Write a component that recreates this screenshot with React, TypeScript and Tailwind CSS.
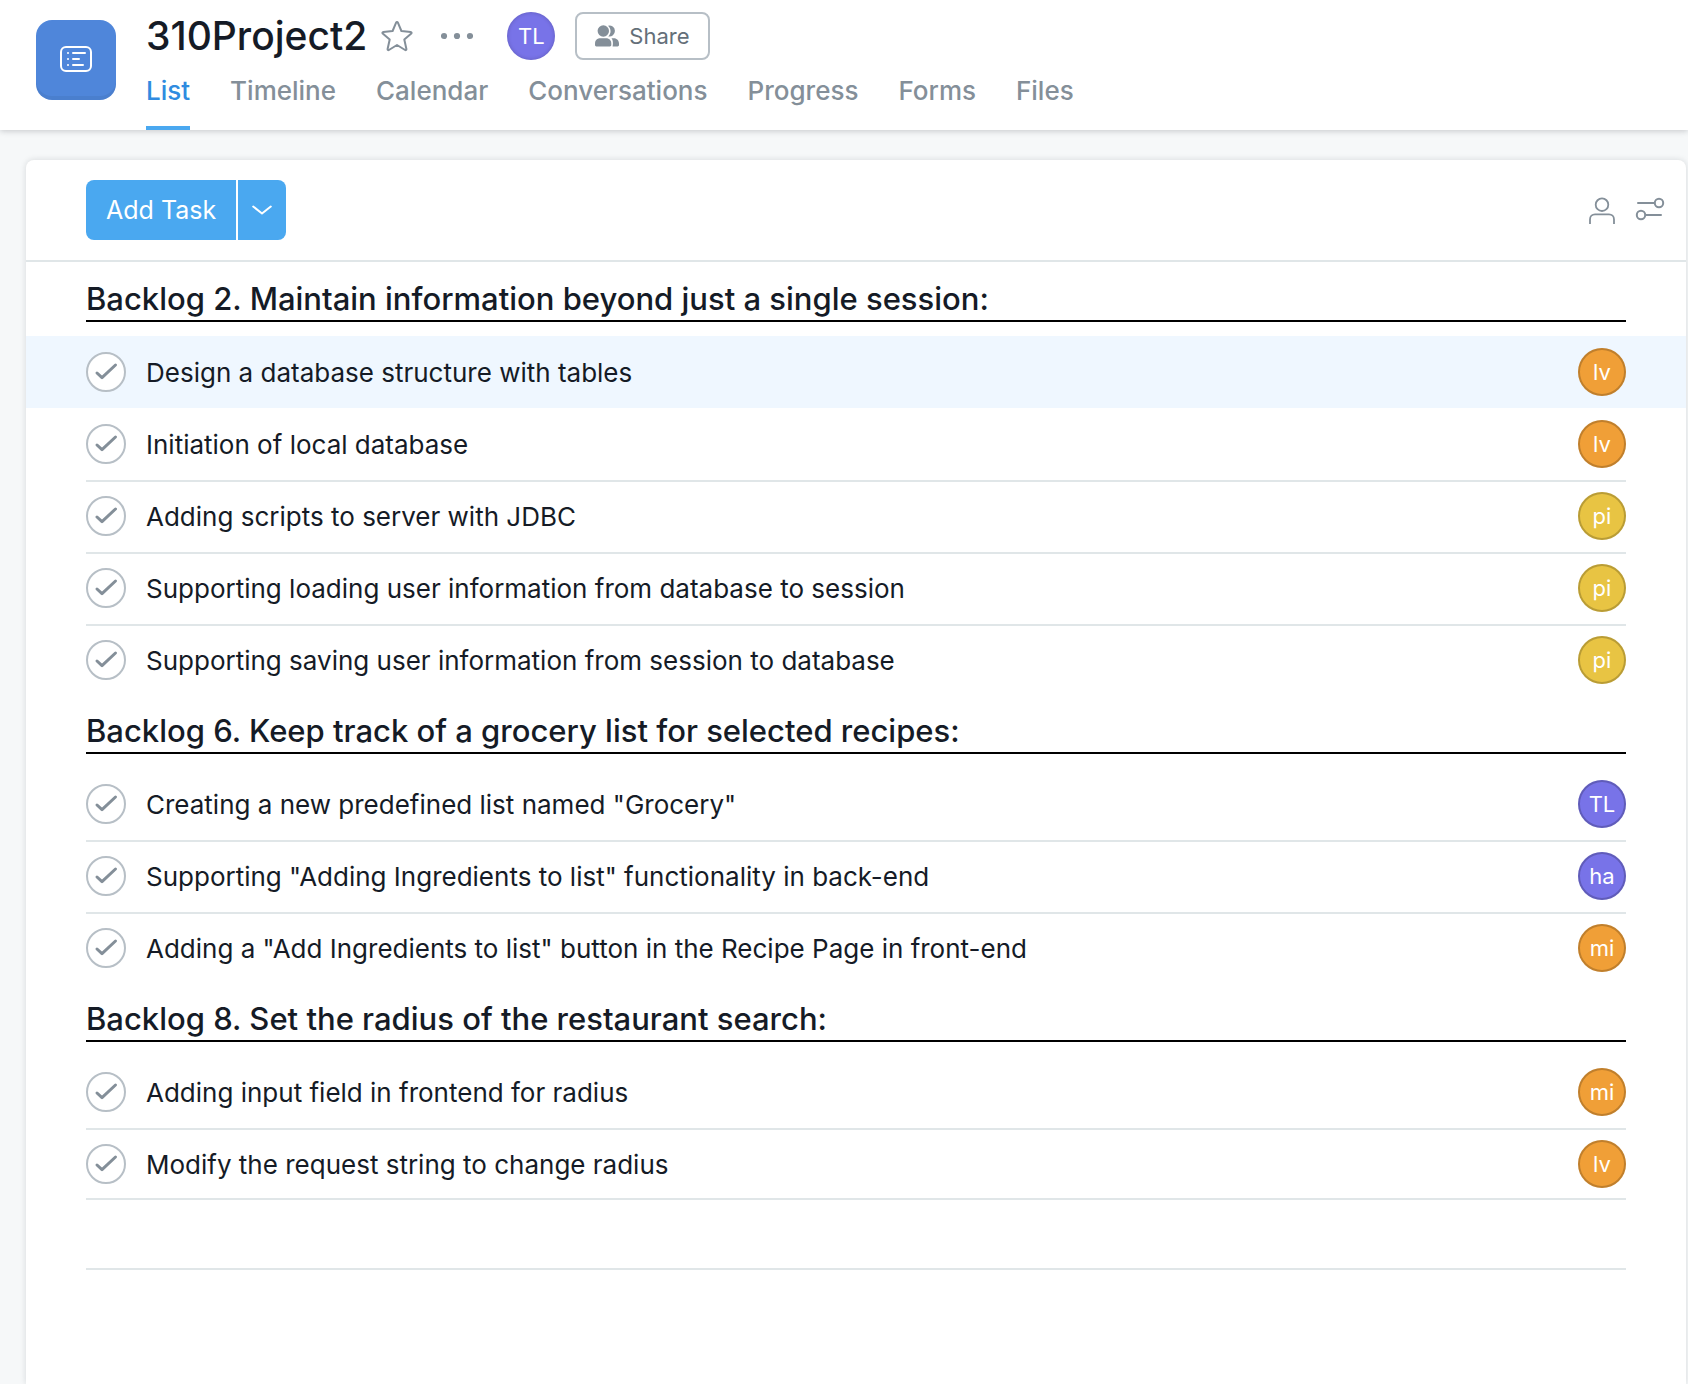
import React from "react";

type Tone = "orange" | "yellow" | "purple";
type Task = { title: string; who: string; tone: Tone; active?: boolean };
type Section = { title: string; tasks: Task[] };

const tabs = ["List", "Timeline", "Calendar", "Conversations", "Progress", "Forms", "Files"];

const sections: Section[] = [
  {
    title: "Backlog 2. Maintain information beyond just a single session:",
    tasks: [
      { title: "Design a database structure with tables", who: "lv", tone: "orange", active: true },
      { title: "Initiation of local database", who: "lv", tone: "orange" },
      { title: "Adding scripts to server with JDBC", who: "pi", tone: "yellow" },
      { title: "Supporting loading user information from database to session", who: "pi", tone: "yellow" },
      { title: "Supporting saving user information from session to database", who: "pi", tone: "yellow" },
    ],
  },
  {
    title: "Backlog 6. Keep track of a grocery list for selected recipes:",
    tasks: [
      { title: 'Creating a new predefined list named "Grocery"', who: "TL", tone: "purple" },
      { title: 'Supporting "Adding Ingredients to list" functionality in back-end', who: "ha", tone: "purple" },
      { title: 'Adding a "Add Ingredients to list" button in the Recipe Page in front-end', who: "mi", tone: "orange" },
    ],
  },
  {
    title: "Backlog 8. Set the radius of the restaurant search:",
    tasks: [
      { title: "Adding input field in frontend for radius", who: "mi", tone: "orange" },
      { title: "Modify the request string to change radius", who: "lv", tone: "orange" },
    ],
  },
];

const tones: Record<Tone, string> = {
  orange: "bg-[#f09f37] shadow-[inset_0_0_0_2px_rgba(0,0,0,0.2)]",
  yellow: "bg-[#e8c443] shadow-[inset_0_0_0_2px_rgba(0,0,0,0.2)]",
  purple: "bg-[#7873e8] shadow-[inset_0_0_0_2px_rgba(0,0,0,0.2)]",
};

function Header() {
  return (
    <header className="relative flex bg-white pl-9 shadow-[0_1px_6px_rgba(21,27,38,0.22)]">
      <div className="mt-5 flex size-20 shrink-0 items-center justify-center rounded-2xl bg-[#4f86da] shadow-[inset_0_-4px_0_rgba(0,0,0,0.05)]">
        <svg width="34" height="28" viewBox="0 0 34 28" fill="none" stroke="white" strokeWidth="2" strokeLinecap="round" className="mb-0.5">
          <rect x="2" y="2" width="30" height="24" rx="5" />
          <path d="M9 8h.01M9 14h.01M9 20h.01M14 8h12M14 14h6M14 20h10" />
        </svg>
      </div>
      <div className="ml-[30px] min-w-0 flex-1 pt-3">
        <div className="flex h-12 items-center">
          <h1 className="text-[39px] leading-[48px] font-medium">310Project2</h1>
          <button type="button" aria-label="Add to favorites" className="ml-2.5">
            <svg width="40" height="40" viewBox="0 0 40 40" fill="none" stroke="#848f99" strokeWidth="2" strokeLinejoin="round">
              <path d="M19.1 6.6a1 1 0 0 1 1.8 0l3.5 8.4 9.3.9c.9.1 1.2 1 .6 1.6l-7 6 2.1 9.5c.2.9-.6 1.4-1.3 1L20 29l-8.100 5c-.7.4-1.500-.1-1.300-1l2.100-9.500-7-6c-.6-.6-.3-1.500.6-1.600l9.300-.9z" />
            </svg>
          </button>
          <button type="button" aria-label="More actions" className="ml-6">
            <svg width="32" height="8" viewBox="0 0 32 8" fill="#848f99">
              <circle cx="3" cy="4" r="3.100" />
              <circle cx="16" cy="4" r="3.100" />
              <circle cx="29" cy="4" r="3.100" />
            </svg>
          </button>
          <button type="button" className="ml-[34px] size-12 rounded-full bg-[#7873e8] text-[22px] text-white shadow-[inset_0_0_4px_rgba(0,0,0,0.2)]">
            TL
          </button>
          <button type="button" className="ml-5 flex h-12 items-center gap-2.5 rounded-lg border-2 border-[#b7bfc6] px-[18px] text-[22px] text-[#646f79]">
            <svg width="24" height="22" viewBox="0 0 24 22" fill="#848f99">
              <circle cx="8.300" cy="6" r="5.700" />
              <path d="M0 20v-1.500C0 15.500 2.200 13.300 5 13.300h6.300c2.800 0 5 2.200 5 5.200V20c0 .8-.6 1.400-1.400 1.400H1.400C.6 21.400 0 20.800 0 20z" />
              <path d="M13 .7a5.500 5.500 0 1 1 .3 10.700c3-3 3.100-7.700-.3-10.700zM16.500 13.300H19c2.800 0 5 2.300 5 5.200V20c0 .8-.6 1.400-1.400 1.400h-5c.5-3.200.6-5.800-1.100-8.100z" />
            </svg>
            Share
          </button>
        </div>
        <nav className="mt-[13px] flex gap-10 text-[26px] leading-9 font-medium text-[#848f99]">
          {tabs.map((tab, i) => (
            <a
              key={tab}
              href="#"
              aria-current={i === 0 ? "page" : undefined}
              className={
                i === 0
                  ? "border-b-4 border-[#4aa8f0] pb-[17px] text-[#2f8be0]"
                  : "border-b-4 border-transparent pb-[17px]"
              }
            >
              {tab}
            </a>
          ))}
        </nav>
      </div>
    </header>
  );
}

function Toolbar() {
  return (
    <div className="flex items-center border-b-2 border-[#e0e6e8] py-5 pr-[21px] pl-[60px]">
      <button type="button" className="h-[60px] rounded-l-lg bg-[#4aa8f0] px-5 pt-0.5 text-[25px] text-white">
        Add Task
      </button>
      <button type="button" aria-label="More ways to add" className="ml-0.5 flex h-[60px] w-12 items-center justify-center rounded-r-lg bg-[#4aa8f0]">
        <svg width="20" height="12" viewBox="0 0 20 12" fill="none" stroke="white" strokeWidth="2" strokeLinecap="round" strokeLinejoin="round">
          <path d="M1.200 2.500 10 9.500l8.800-7" />
        </svg>
      </button>
      <div className="ml-auto flex items-center gap-[19px]">
        <button type="button" aria-label="Filter by assignee">
          <svg width="28" height="28" viewBox="0 0 28 28" fill="none" stroke="#848f99" strokeWidth="1.800">
            <circle cx="14" cy="8.700" r="6.300" />
            <path d="M2 28v-4.600c0-3 2.300-5.100 5-5.100h14c2.700 0 5 2.100 5 5.100V28" />
          </svg>
        </button>
        <button type="button" aria-label="View options">
          <svg width="30" height="28" viewBox="0 0 30 28" fill="none" stroke="#848f99" strokeWidth="2" strokeLinecap="round">
            <path d="M3 7h16M11 19h15" />
            <circle cx="24" cy="7" r="4.200" />
            <circle cx="6" cy="19" r="4.200" />
          </svg>
        </button>
      </div>
    </div>
  );
}

function TaskRow({ task, id, divided, last }: { task: Task; id: string; divided: boolean; last: boolean }) {
  return (
    <li className={task.active ? "bg-[#eff7ff] px-[60px]" : "px-[60px]"}>
      <div
        className={
          "flex h-[72px] items-center " +
          (divided ? "shadow-[inset_0_2px_0_#e0e6e8] " : "") +
          (last ? "border-b-2 border-[#e0e6e8] pt-0.5" : "")
        }
      >
        <span className="grid size-10 shrink-0">
          <input
            id={id}
            type="checkbox"
            className="col-start-1 row-start-1 size-10 appearance-none rounded-full border-2 border-[#b7bfc6] bg-white"
          />
          <svg viewBox="0 0 40 40" fill="none" stroke="#848f99" strokeWidth="3" strokeLinecap="round" strokeLinejoin="round" className="pointer-events-none col-start-1 row-start-1 size-10">
            <path d="M11 21l5 4.700L29.500 13" />
          </svg>
        </span>
        <label htmlFor={id} className="min-w-0 flex-1 truncate pt-0.5 pl-5 text-[26px] leading-9">
          {task.title}
        </label>
        <button type="button" className={"size-12 shrink-0 rounded-full text-[22px] text-white " + tones[task.tone]}>
          {task.who}
        </button>
      </div>
    </li>
  );
}

export default function App() {
  return (
    <div className="flex min-h-screen flex-col bg-[#f6f8f9] font-['Inter',sans-serif] text-[#151b26]">
      <Header />
      <main className="mt-[30px] mr-0.5 ml-[26px] flex-1 rounded-t-lg bg-white shadow-[0_0_6px_rgba(21,27,38,0.14)]">
        <Toolbar />
        <div className="pt-0.5">
          {sections.map((section, s) => (
            <section key={section.title}>
              <div className="px-[60px] pb-3.5">
                <h2 className="flex h-[58px] items-end border-b-2 border-black text-[31px] leading-[42px] font-medium">
                  {section.title}
                </h2>
              </div>
              <ul>
                {section.tasks.map((task, i) => (
                  <TaskRow
                    key={task.title}
                    task={task}
                    id={`task-${s}-${i}`}
                    divided={i > 0 && !section.tasks[i - 1].active}
                    last={s === sections.length - 1 && i === section.tasks.length - 1}
                  />
                ))}
              </ul>
            </section>
          ))}
          <div className="mx-[60px] h-[70px] border-b-2 border-[#e0e6e8]" />
        </div>
      </main>
    </div>
  );
}
